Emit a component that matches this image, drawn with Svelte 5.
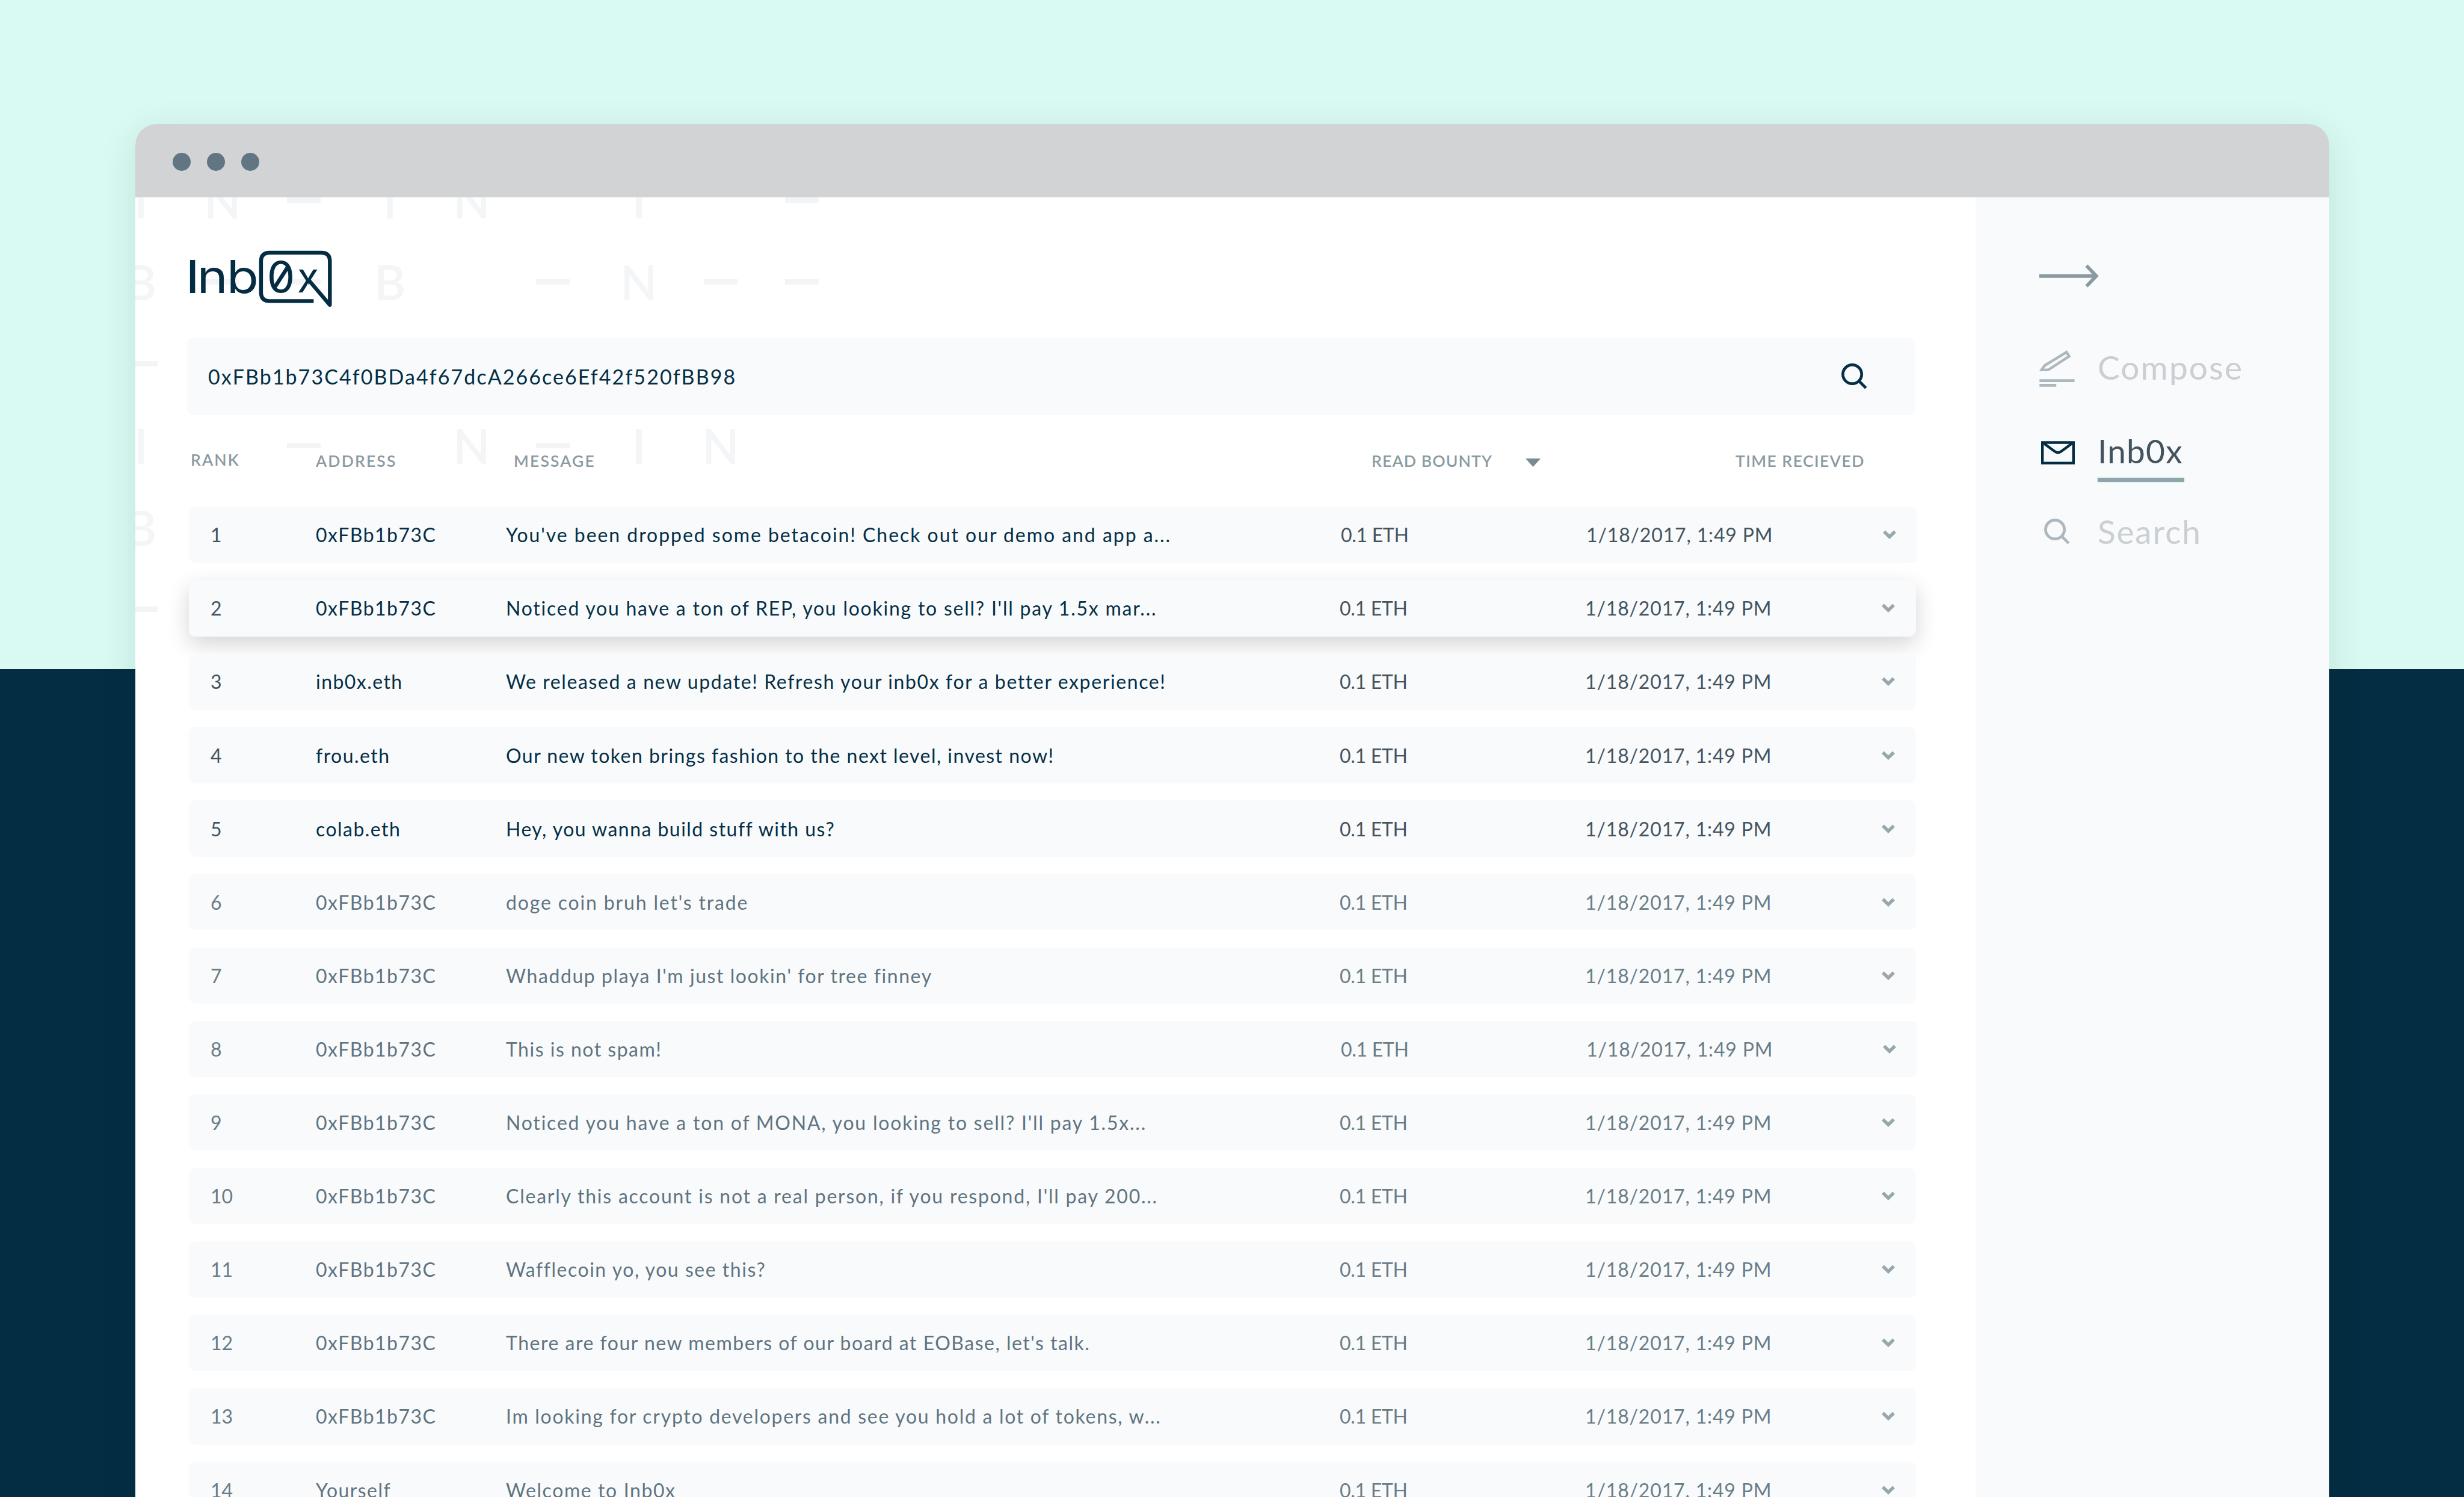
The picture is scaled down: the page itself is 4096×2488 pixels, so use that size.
<script>
	const query = "0xFBb1b73C4f0BDa4f67dcA266ce6Ef42f520fBB98";

	// tracking is the letter spacing of the message, in px
	const messages = [
		{ address: "0xFBb1b73C", text: "You've been dropped some betacoin! Check out our demo and app a...", tracking: 1.95, wide: true },
		{ address: "0xFBb1b73C", text: "Noticed you have a ton of REP, you looking to sell? I'll pay 1.5x mar...", tracking: 1.76, raised: true },
		{ address: "inb0x.eth", text: "We released a new update! Refresh your inb0x for a better experience!", tracking: 1.61 },
		{ address: "frou.eth", text: "Our new token brings fashion to the next level, invest now!", tracking: 1.46 },
		{ address: "colab.eth", text: "Hey, you wanna build stuff with us?", tracking: 1.46 },
		{ address: "0xFBb1b73C", text: "doge coin bruh let's trade", tracking: 1.84, read: true },
		{ address: "0xFBb1b73C", text: "Whaddup playa I'm just lookin' for tree finney", tracking: 1.56, read: true },
		{ address: "0xFBb1b73C", text: "This is not spam!", tracking: 1.5, read: true, wide: true },
		{ address: "0xFBb1b73C", text: "Noticed you have a ton of MONA, you looking to sell? I'll pay 1.5x...", tracking: 1.79, read: true },
		{ address: "0xFBb1b73C", text: "Clearly this account is not a real person, if you respond, I'll pay 200...", tracking: 1.77, read: true },
		{ address: "0xFBb1b73C", text: "Wafflecoin yo, you see this?", tracking: 1.52, read: true },
		{ address: "0xFBb1b73C", text: "There are four new members of our board at EOBase, let's talk.", tracking: 1.51, read: true },
		{ address: "0xFBb1b73C", text: "Im looking for crypto developers and see you hold a lot of tokens, w...", tracking: 1.71, read: true },
		{ address: "Yourself", text: "Welcome to Inb0x", tracking: 1.6, read: true }
	];

	// faint lettering behind the page
	const pattern = [
		["I", "N", "-", "I", "N", "", "I", "", "-"],
		["B", "-", "-", "B", "", "-", "N", "-", "-"],
		["-", "", "", "", "", "", "", "", ""],
		["I", "", "-", "", "N", "-", "I", "N", ""],
		["B", "", "", "", "", "", "", "", ""],
		["-", "", "", "", "", "", "", "", ""]
	];
</script>

{#snippet magnifier()}
	<svg class="magnifier" viewBox="0 0 49 49" fill="none" stroke="currentColor" stroke-width="5.4">
		<circle cx="20.6" cy="20.6" r="17.8" />
		<path d="M32.5 32.5L46.5 46.5" />
	</svg>
{/snippet}

<div class="stage">
	<div class="window">
		<div class="titlebar"><i></i><i></i><i></i></div>
		<div class="body">
			<main>
				<div class="pattern">
					{#each pattern as line}
						{#each line as cell}
							<span>{#if cell === "-"}<b></b>{:else}{cell}{/if}</span>
						{/each}
					{/each}
				</div>

				<svg class="logo" viewBox="60 60 810 345">
					<clipPath id="x-arms">
						<path d="M660 170H800V250H737V320H660Z" />
					</clipPath>
					<g fill="#042d43" font-family="Inter, sans-serif">
						<text x="38.5" y="316" font-size="260" font-weight="500">I</text>
						<text x="99" y="316" font-size="260" textLength="175" lengthAdjust="spacingAndGlyphs">n</text>
						<text x="268" y="316" font-size="260" textLength="182" lengthAdjust="spacingAndGlyphs">b</text>
						<text x="497" y="313" font-size="245" textLength="159" lengthAdjust="spacingAndGlyphs">0</text>
						<text x="668" y="312" font-size="236" textLength="124" lengthAdjust="spacingAndGlyphs" clip-path="url(#x-arms)">x</text>
					</g>
					<g fill="none" stroke="#042d43" stroke-width="22">
						<path d="M543 280L614 170" />
						<path d="M762 362H512Q463 362 463 312V136Q463 87 512 87H806Q854 87 854 136V384L728 236" stroke-linejoin="round" />
					</g>
				</svg>

				<div class="search">
					<span>{query}</span>
					{@render magnifier()}
				</div>

				<div class="head">
					<span class="rank-head">RANK</span>
					<span>ADDRESS</span>
					<span>MESSAGE</span>
					<span class="tight">READ BOUNTY</span>
					<svg class="sort" viewBox="0 0 25 14"><path d="M0 0H25L12.5 14Z" fill="currentColor" /></svg>
					<span class="time">TIME RECIEVED</span>
				</div>

				<div class="rows">
					{#each messages as message, i}
						<div class="row" class:wide={message.wide} class:raised={message.raised} class:read={message.read}>
							<span class="meta">{i + 1}</span>
							<span class="address">{message.address}</span>
							<span style:letter-spacing="{message.tracking}px">{message.text}</span>
							<span class="meta bounty">0.1 ETH</span>
							<span class="meta date">1/18/2017, 1:49 PM</span>
							<svg class="chevron" viewBox="0 0 24 15"><path d="M3 2.5L12 11.2L21 2.5" /></svg>
						</div>
					{/each}
				</div>
			</main>

			<aside>
				<svg class="arrow" viewBox="0 0 113 44" fill="none" stroke="currentColor" stroke-width="6.6">
					<path d="M0 22.3H106M89.5 2.6L108.2 22.3L89.5 41.6" />
				</svg>
				<nav>
					<div class="item compose">
						<svg viewBox="0 0 68 71" fill="none" stroke="currentColor" stroke-width="5">
							<path d="M4 37.6L8.5 31Q9.5 29.5 11 28.6L51.5 3.8L56.5 11.5L19 36Q17 37.4 15 37.4Z" />
							<path d="M0 58H66.7M0 66.8H32" stroke-width="5.4" />
						</svg>
						<span>Compose</span>
					</div>
					<div class="item active">
						<svg class="envelope" viewBox="0 0 64 44" fill="none" stroke="currentColor" stroke-width="5">
							<path d="M2.5 2.5H61.5V41.5H2.5Z" />
							<path d="M5 4L25.5 19.2Q32 24 38.5 19.2L59 4" />
						</svg>
						<span>Inb0x</span>
					</div>
					<div class="item find">
						{@render magnifier()}
						<span>Search</span>
					</div>
				</nav>
			</aside>
		</div>
	</div>
</div>

<style>
	:global(body) {
		margin: 0;
	}
	.stage {
		box-sizing: border-box;
		width: 4096px;
		height: 2488px;
		padding: 206px 224px 0 225px;
		overflow: hidden;
		background: linear-gradient(#d8faf2 1112px, #042d43 1112px);
		font-family: Lato, sans-serif;
		color: #042f45;
	}
	.window {
		display: flex;
		flex-direction: column;
		height: 2400px;
		border-radius: 35px 35px 0 0;
		overflow: hidden;
		background: #fff;
		box-shadow: 0 16px 64px rgba(0, 50, 50, 0.11);
	}
	.titlebar {
		display: flex;
		align-items: center;
		gap: 27px;
		height: 122px;
		padding: 3px 0 0 62px;
		box-sizing: border-box;
		background: #d1d3d4;
	}
	.titlebar i {
		width: 30px;
		height: 30px;
		border-radius: 50%;
		background: #617583;
	}
	.body {
		display: flex;
		flex: 1;
		overflow: hidden;
	}
	main {
		position: relative;
		width: 3059px;
		padding: 84px 0 0 86px;
		box-sizing: border-box;
		overflow: hidden;
	}
	.pattern {
		position: absolute;
		top: -64px;
		left: -63px;
		display: grid;
		grid-template-columns: repeat(3, 144px 128px 142px);
		grid-auto-rows: 136px;
		font-size: 80px;
		font-weight: 600;
		line-height: 1;
		color: #f3f5f7;
	}
	.pattern span {
		display: flex;
		align-items: center;
		justify-content: center;
	}
	.pattern b {
		width: 56px;
		height: 9px;
		background: #f3f4f6;
	}
	.logo {
		position: relative;
		display: block;
		width: 237px;
		height: 101px;
		margin-left: 5px;
		overflow: visible;
	}
	.search {
		position: relative;
		display: flex;
		align-items: center;
		justify-content: space-between;
		box-sizing: border-box;
		width: 2872px;
		height: 129px;
		margin-top: 48px;
		padding: 0 79px 0 35px;
		border-radius: 11px;
		background: #f9fafc;
		font-size: 34px;
		letter-spacing: 2.06px;
	}
	.magnifier {
		width: 43px;
		height: 43px;
	}
	.head {
		position: relative;
		display: grid;
		grid-template-columns: 208px 329px 1426px 256px 349px auto;
		align-items: center;
		height: 152px;
		margin-left: 6px;
		font-size: 26.5px;
		font-weight: 600;
		letter-spacing: 2.15px;
		color: #8a9aa1;
	}
	.rank-head {
		margin-top: -5px;
	}
	.tight {
		letter-spacing: 1.15px;
	}
	.time {
		letter-spacing: 1.45px;
	}
	.sort {
		width: 25px;
		height: 14px;
		margin-top: 5px;
		color: #788b94;
	}
	.rows {
		position: relative;
		display: flex;
		flex-direction: column;
		gap: 28.5px;
		margin-left: 3px;
	}
	.row {
		display: grid;
		grid-template-columns: 175px 316px 1fr 409px 492px 24px;
		align-items: center;
		flex-shrink: 0;
		box-sizing: border-box;
		position: relative;
		width: 2871px;
		height: 93.6px;
		padding: 0 34px 0 36px;
		border-radius: 11px;
		background: #f9fafc;
		font-size: 32px;
		white-space: nowrap;
	}
	.row.wide {
		width: 2873px;
	}
	.row.raised {
		box-shadow: 0 13px 36px rgba(0, 0, 0, 0.17);
	}
	.meta {
		color: #44545f;
	}
	.read {
		color: #5f7480;
	}
	.read .meta {
		color: #6a7d87;
	}
	.address {
		letter-spacing: 1.45px;
	}
	.bounty {
		padding-left: 1px;
		letter-spacing: -0.3px;
	}
	.date {
		letter-spacing: 0.85px;
	}
	.chevron {
		width: 24px;
		height: 15px;
		fill: none;
		stroke: #98a6ad;
		stroke-width: 5.4;
	}
	aside {
		flex: 1;
		padding: 111px 0 0 106px;
		background: #f9fafc;
	}
	.arrow {
		display: block;
		width: 99px;
		height: 39px;
		color: #8a9aa1;
	}
	nav {
		margin-top: 98px;
	}
	.item {
		display: grid;
		grid-template-columns: 97px max-content;
		align-items: center;
		height: 64px;
		font-size: 55px;
		line-height: 64px;
		letter-spacing: 2.1px;
		color: #c9cfd2;
	}
	.item svg {
		color: #adb8be;
	}
	.compose svg {
		width: 60px;
		height: 62px;
		margin-top: 6px;
	}
	.active {
		margin: 77px 0 70px;
		letter-spacing: 1.2px;
		color: #44545f;
	}
	.active .envelope {
		width: 56px;
		height: 39px;
		margin: 7px 0 0 3px;
		color: #042d43;
	}
	.active span {
		position: relative;
		width: 144px;
	}
	.active span::after {
		content: "";
		position: absolute;
		left: 0;
		top: 77px;
		width: 144px;
		height: 7px;
		background: #8fa5aa;
		box-shadow: 0 0 2px 1px #d8faf2;
	}
	.find .magnifier {
		margin-left: 8px;
	}
	.find {
		letter-spacing: 1.8px;
	}
</style>
